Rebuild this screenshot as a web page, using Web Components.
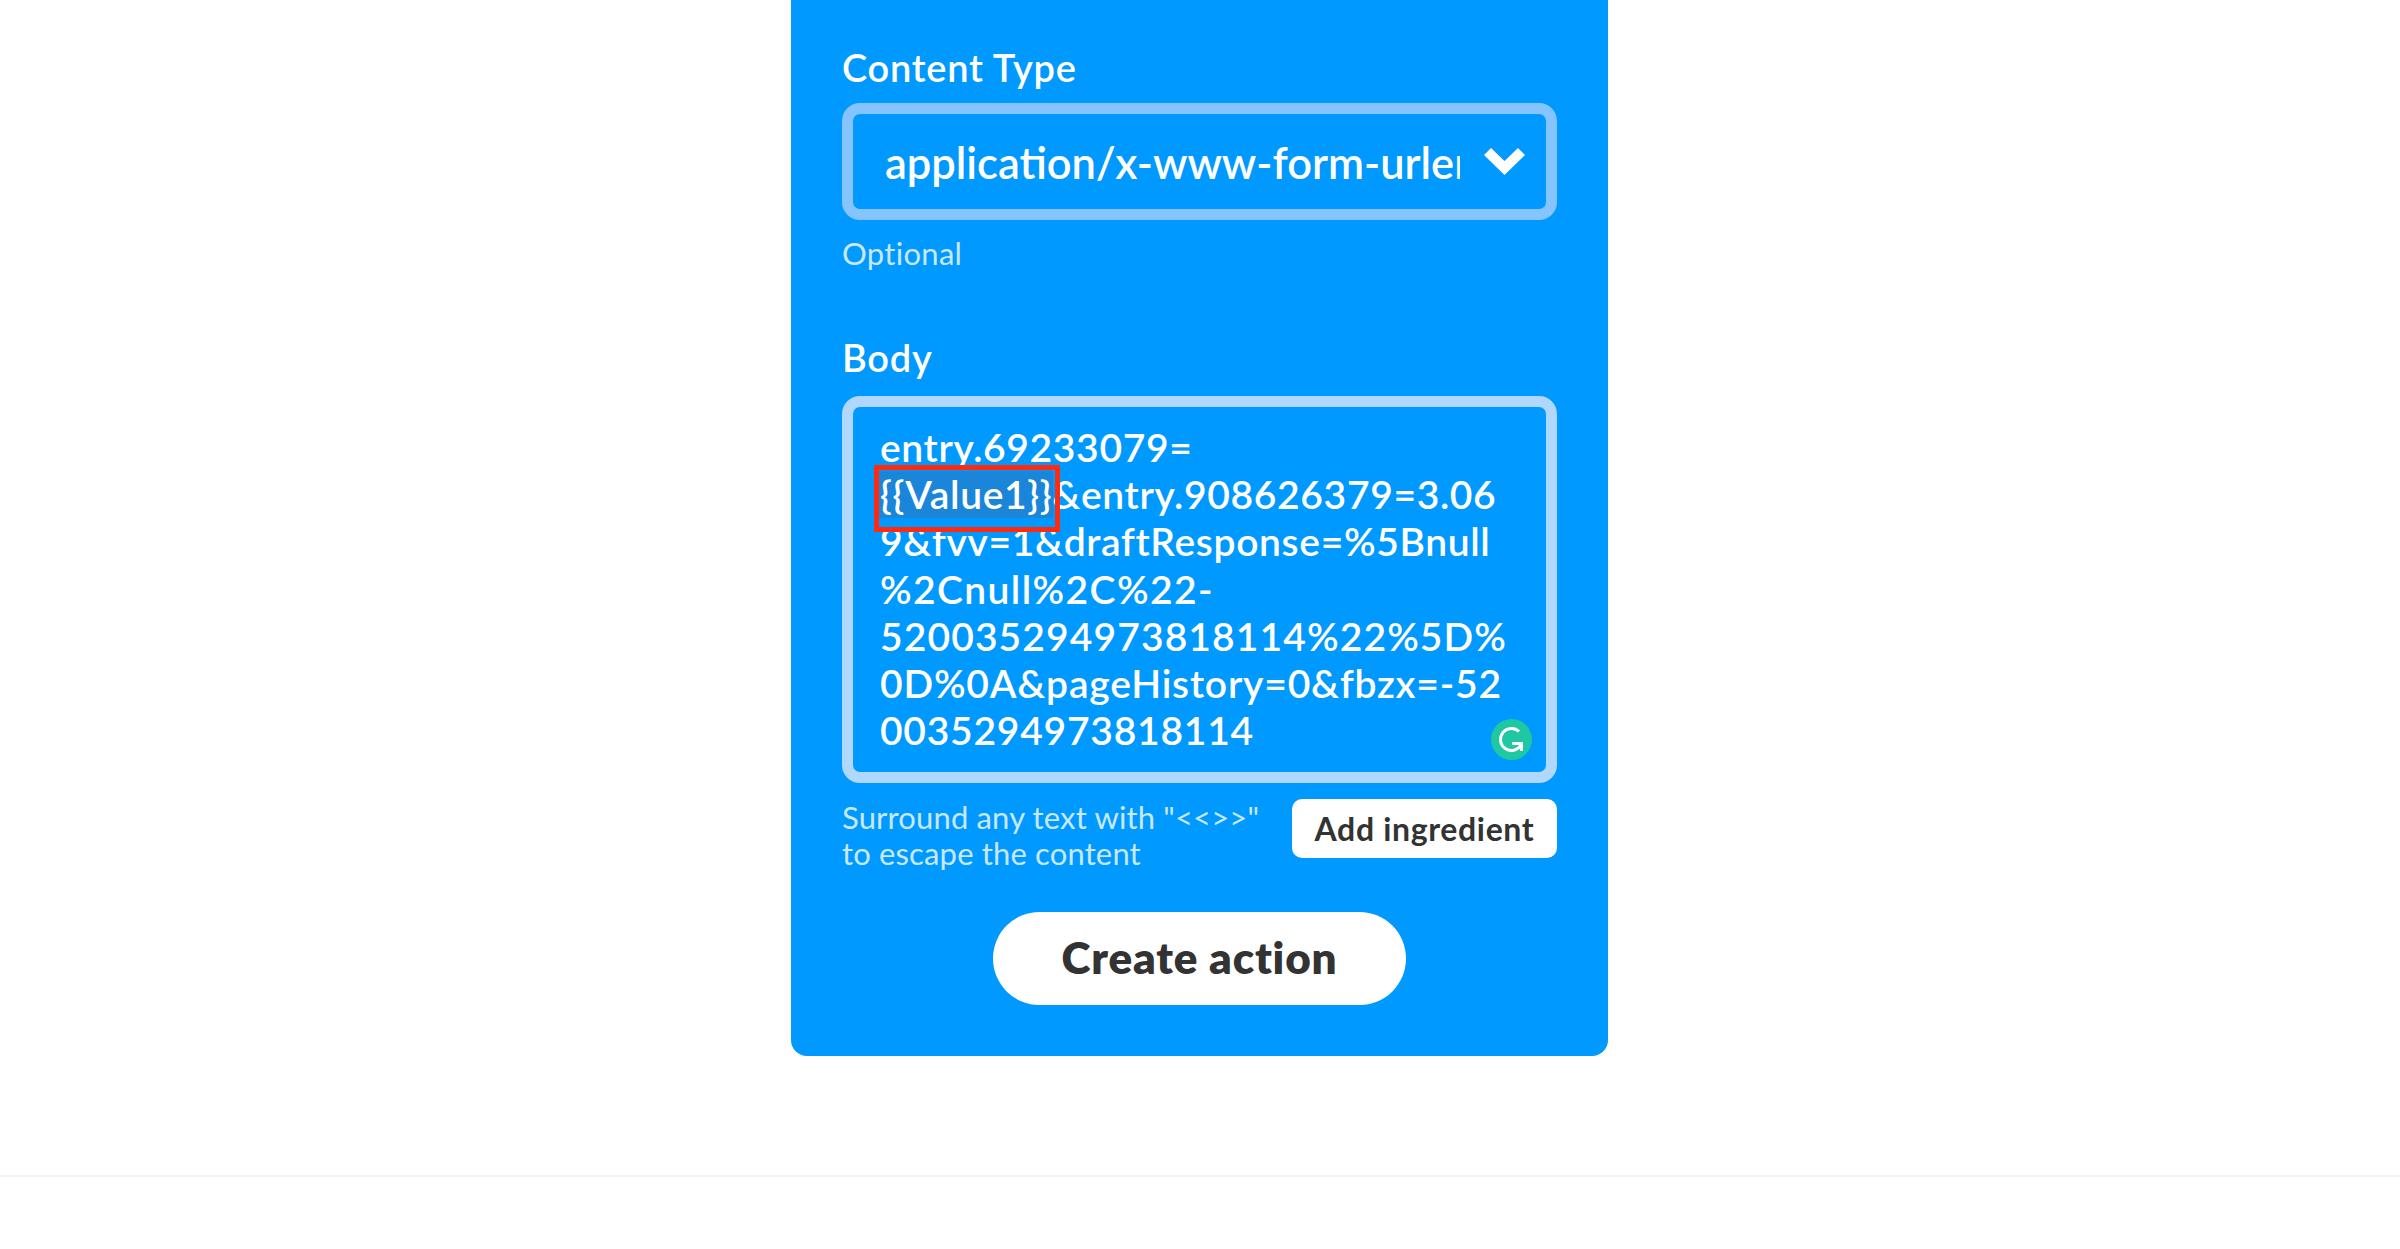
<!DOCTYPE html>
<html lang="en">
<head>
<meta charset="utf-8">
<title>Create action</title>
<style>
  html, body { margin: 0; background: #fff; }
  body { font-family: "Lato", "Open Sans", sans-serif; overflow: hidden; height: 1249px; }
</style>
</head>
<body>
<action-page>
  <action-card>
    <form-field label="Content Type" hint="Optional">
      <select-box value="application/x-www-form-urlencoded"></select-box>
    </form-field>
    <form-field label="Body" class="body-field">
      <body-editor></body-editor>
    </form-field>
    <ingredient-row>Surround any text with "&lt;&lt;&gt;&gt;"<br>to escape the content</ingredient-row>
    <create-button>Create action</create-button>
  </action-card>
</action-page>

<script>
class ActionPage extends HTMLElement {
  constructor() {
    super();
    this.attachShadow({ mode: 'open' });
    this.shadowRoot.innerHTML = `
      <style>
        :host { display: block; }
        .top { display: flex; justify-content: center; height: 1175px; padding-right: 1px; }
        .rule { border-top: 2px solid #f3f3f3; }
      </style>
      <div class="top"><slot></slot></div>
      <div class="rule"></div>
    `;
  }
}

class ActionCard extends HTMLElement {
  constructor() {
    super();
    this.attachShadow({ mode: 'open' });
    this.shadowRoot.innerHTML = `
      <style>
        :host {
          display: flex;
          flex-direction: column;
          box-sizing: border-box;
          width: 817px;
          height: 1056px;
          padding: 43px 51px 0;
          background: #0099ff;
          border-radius: 0 0 16px 16px;
          color: #fff;
        }
      </style>
      <slot></slot>
    `;
  }
}

class FormField extends HTMLElement {
  constructor() {
    super();
    this.attachShadow({ mode: 'open' });
    const label = this.getAttribute('label') || '';
    const hint = this.getAttribute('hint');
    this.shadowRoot.innerHTML = `
      <style>
        :host { display: block; }
        :host(.body-field) { margin-top: 62px; }
        :host(.body-field) label { margin-bottom: 15px; }
        label {
          display: block;
          font-size: 38px;
          line-height: 48px;
          font-weight: 600;
          letter-spacing: 0.75px;
          margin-bottom: 12px;
        }
        .hint {
          margin-top: 15px;
          font-size: 31px;
          line-height: 36px;
          letter-spacing: 0.3px;
          color: rgba(255, 255, 255, 0.8);
        }
      </style>
      <label>${label}</label>
      <slot></slot>
      ${hint ? `<div class="hint">${hint}</div>` : ''}
    `;
  }
}

class SelectBox extends HTMLElement {
  constructor() {
    super();
    this.attachShadow({ mode: 'open' });
    this.shadowRoot.innerHTML = `
      <style>
        :host {
          display: flex;
          align-items: center;
          box-sizing: border-box;
          height: 117px;
          padding: 0 21px 0 32px;
          border: 11px solid #85c4ff;
          border-radius: 18px;
        }
        .value {
          flex: none;
          width: 575px;
          overflow: hidden;
          white-space: nowrap;
          font-size: 43.4px;
          line-height: 60px;
          font-weight: 600;
        }
        svg { flex: none; width: 41px; height: 27px; margin-left: auto; }
      </style>
      <span class="value">${this.getAttribute('value') || ''}</span>
      <svg viewBox="0 0 41 27"><polygon fill="#fff" points="0,7 7,0 20.5,13 34,0 41,7 20.5,27"/></svg>
    `;
  }
}

class BodyEditor extends HTMLElement {
  constructor() {
    super();
    this.attachShadow({ mode: 'open' });
    this.shadowRoot.innerHTML = `
      <style>
        :host {
          display: block;
          position: relative;
          box-sizing: border-box;
          height: 387px;
          padding: 17px 20px 0 27px;
          border: 11px solid #b0d8ff;
          border-radius: 18px;
          font-size: 39px;
          line-height: 47.2px;
          font-weight: 600;
          letter-spacing: 0.65px;
          white-space: nowrap;
        }
        .line { display: block; }
        mark {
          position: relative;
          display: inline-block;
          padding: 0 1px;
          margin: 0 -1px;
          background: #1a85d9;
          color: #fff;
        }
        /* annotation box drawn over the text */
        mark::after {
          content: '';
          position: absolute;
          left: -5px;
          right: -7px;
          top: -6px;
          bottom: -14px;
          border: 5px solid #ff2a10;
          pointer-events: none;
        }
        .grammarly { position: absolute; right: 14px; bottom: 12px; width: 41px; height: 41px; }
      </style>
      <span class="line">entry.69233079=</span>
      <span class="line"><mark>{{Value1}}</mark>&amp;entry.908626379=3.06</span>
      <span class="line">9&amp;fvv=1&amp;draftResponse=%5Bnull</span>
      <span class="line" style="letter-spacing: 1.4px">%2Cnull%2C%22-</span>
      <span class="line" style="letter-spacing: 1.1px">520035294973818114%22%5D%</span>
      <span class="line" style="letter-spacing: 0.8px">0D%0A&amp;pageHistory=0&amp;fbzx=-52</span>
      <span class="line" style="letter-spacing: 0.75px">0035294973818114</span>
      <svg class="grammarly" viewBox="0 0 41 41">
        <circle cx="20.5" cy="20.5" r="20.5" fill="#1ec8a0"/>
        <path d="M28 12.5a11 11 0 1 0 2 13.5" fill="none" stroke="#fff" stroke-width="3"/>
        <path d="M21 23h11v9h-3v-6h-8z" fill="#fff"/>
      </svg>
    `;
  }
}

class IngredientRow extends HTMLElement {
  constructor() {
    super();
    this.attachShadow({ mode: 'open' });
    this.shadowRoot.innerHTML = `
      <style>
        :host {
          display: flex;
          justify-content: space-between;
          align-items: flex-start;
          margin-top: 16px;
        }
        .help {
          font-size: 31px;
          line-height: 36px;
          letter-spacing: 0.15px;
          color: rgba(255, 255, 255, 0.8);
        }
        button {
          box-sizing: border-box;
          width: 265px;
          height: 59px;
          padding: 0;
          border: 0;
          border-radius: 10px;
          background: #fff;
          color: #333;
          letter-spacing: 0.65px;
          font: 700 32px "Lato", "Open Sans", sans-serif;
        }
      </style>
      <div class="help"><slot></slot></div>
      <button type="button">Add ingredient</button>
    `;
  }
}

class CreateButton extends HTMLElement {
  constructor() {
    super();
    this.attachShadow({ mode: 'open' });
    this.shadowRoot.innerHTML = `
      <style>
        :host { display: flex; justify-content: center; margin-top: 41px; }
        button {
          width: 413px;
          height: 93px;
          padding: 0 0 3px;
          border: 0;
          border-radius: 47px;
          background: #fff;
          color: #333;
          letter-spacing: 0.8px;
          font: 800 44px "Lato", "Open Sans", sans-serif;
        }
      </style>
      <button type="button"><slot></slot></button>
    `;
  }
}

customElements.define('action-page', ActionPage);
customElements.define('action-card', ActionCard);
customElements.define('form-field', FormField);
customElements.define('select-box', SelectBox);
customElements.define('body-editor', BodyEditor);
customElements.define('ingredient-row', IngredientRow);
customElements.define('create-button', CreateButton);
</script>
</body>
</html>
